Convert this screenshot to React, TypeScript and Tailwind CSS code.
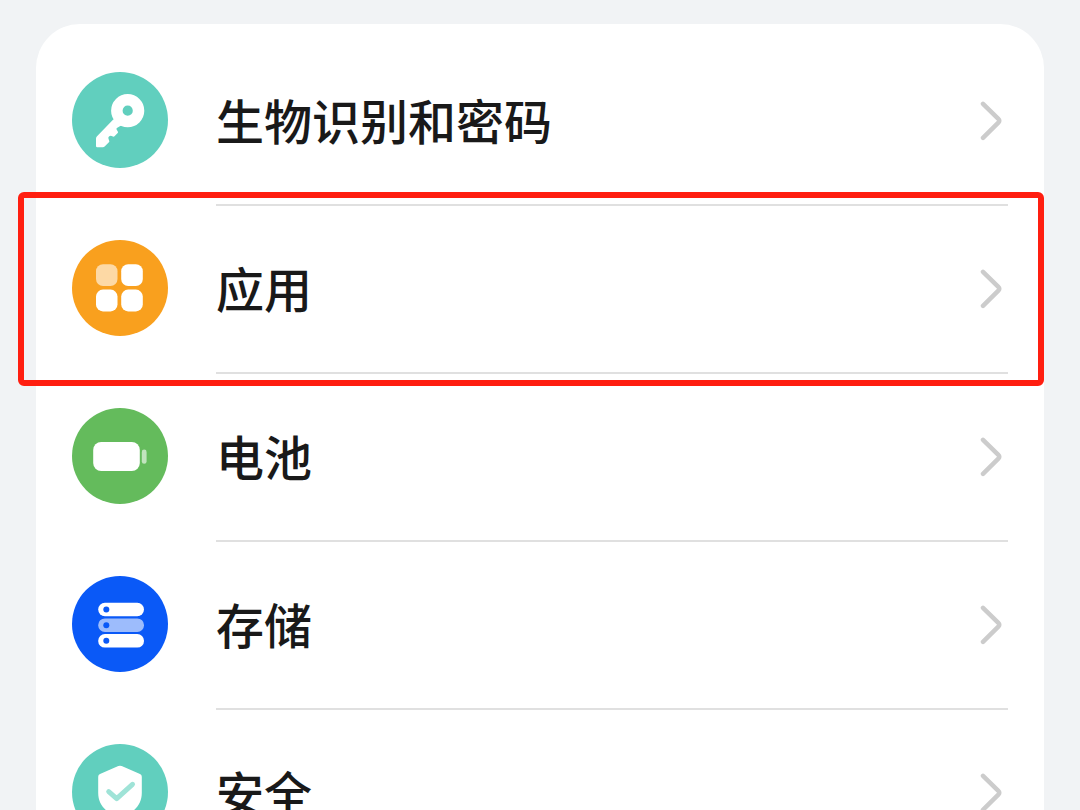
import { ReactNode } from 'react';

interface ISettingItem {
   id: string;
   label: string;
   circle: string;
   icon: ReactNode;
   highlighted?: boolean;
}

const KeyIcon = () => (
   <svg viewBox="0 0 96 96" className="size-24" fill="#fff" aria-hidden="true">
      <path
         fillRule="evenodd"
         d="M55.7 22.1a16.6 16.6 0 1 1 0 33.2 16.6 16.6 0 1 1 0-33.2ZM55.7 33.6a5.1 5.1 0 1 0 0 10.2 5.1 5.1 0 1 0 0-10.2Z"
      />
      <path d="M41.5 47.2 24.8 64.6a3 3 0 0 0-.8 2V74a1.2 1.2 0 0 0 1.2 1.2h5.6a3 3 0 0 0 2.1-.9l4-4.1a1.4 1.4 0 0 0 .2-1.8l-.6-1.7a1.8 1.8 0 0 1 .5-2.1l.8-.6a1.8 1.8 0 0 1 1.8-.1l1.3.7a1.4 1.4 0 0 0 1.6-.3l3.2-3.3a1.2 1.2 0 0 0 .1-1.5l-1.2-1.900a1.200 1.200 0 0 1 .3-1.500L50 53Z" />
   </svg>
);

const AppsIcon = () => (
   <svg viewBox="0 0 96 96" className="size-24" fill="#fff" aria-hidden="true">
      <rect x="24" y="24.2" width="21.5" height="21.8" rx="7" opacity="0.6" />
      <rect x="49.2" y="24.2" width="21.6" height="21.8" rx="7" />
      <rect x="24" y="49.6" width="21.5" height="21.8" rx="7" />
      <rect x="49.2" y="49.6" width="21.6" height="21.8" rx="7" />
   </svg>
);

const BatteryIcon = () => (
   <svg viewBox="0 0 96 96" className="size-24" fill="#fff" aria-hidden="true">
      <rect x="21.2" y="34" width="46.6" height="29" rx="8" />
      <rect x="69.8" y="41.6" width="4.8" height="14.2" rx="2.4" opacity="0.6" />
   </svg>
);

const StorageIcon = () => (
   <svg viewBox="0 0 96 96" className="size-24" fill="#fff" aria-hidden="true">
      <rect x="26.2" y="26.7" width="45.8" height="13.5" rx="6.7" />
      <rect x="26.2" y="42.4" width="45.8" height="13.5" rx="6.7" opacity="0.6" />
      <rect x="26.2" y="58.1" width="45.8" height="13.5" rx="6.7" />
      <g fill="#0a59f7">
         <circle cx="34.3" cy="33.5" r="3" />
         <circle cx="34.3" cy="49.2" r="3" />
         <circle cx="34.3" cy="64.8" r="3" />
      </g>
   </svg>
);

const ShieldIcon = () => (
   <svg viewBox="0 0 96 96" className="size-24" fill="#fff" aria-hidden="true">
      <path d="M46.3 22.1a4.5 4.5 0 0 1 3.4 0L68 30a3 3 0 0 1 1.8 2.8V49c0 11.5-7.5 19-19.8 24.8a4.5 4.5 0 0 1-4 0C33.7 68 26.2 60.5 26.2 49V32.8A3 3 0 0 1 28 30Z" />
      <path
         d="M36.7 47.6 44.7 54.6 60.5 40.3"
         fill="none"
         stroke="#9fe3d7"
         strokeWidth="5"
         strokeLinecap="round"
         strokeLinejoin="round"
      />
   </svg>
);

const ChevronIcon = () => (
   <svg viewBox="0 0 24 40" className="mr-1 h-10 w-6 shrink-0" fill="none" aria-hidden="true">
      <path
         d="M3 2.8 18.6 18.2a2.2 2.2 0 0 1 0 3.200L3 36.800"
         stroke="#ccc"
         strokeWidth="4.500"
         strokeLinecap="round"
         strokeLinejoin="round"
      />
   </svg>
);

const items: ISettingItem[] = [
   { id: 'biometrics', label: '生物识别和密码', circle: 'bg-[#61cfbe]', icon: <KeyIcon /> },
   { id: 'apps', label: '应用', circle: 'bg-[#f9a01e]', icon: <AppsIcon />, highlighted: true },
   { id: 'battery', label: '电池', circle: 'bg-[#64bb5c]', icon: <BatteryIcon /> },
   { id: 'storage', label: '存储', circle: 'bg-[#0a59f7]', icon: <StorageIcon /> },
   { id: 'security', label: '安全', circle: 'bg-[#61cfbe]', icon: <ShieldIcon /> },
];

const SettingRow = ({ item, isFirst }: { item: ISettingItem; isFirst: boolean }) => (
   <li className="relative">
      <a href={`#${item.id}`} className="flex h-42 items-center gap-12 px-9">
         <span className={`size-24 shrink-0 rounded-full ${item.circle}`}>{item.icon}</span>
         <span
            className={`flex flex-1 items-center justify-between self-stretch border-t-2 ${
               isFirst ? 'border-transparent' : 'border-[#e0e0e0]'
            }`}>
            <span className="pb-1 text-5xl font-medium text-[#191919]">{item.label}</span>
            <ChevronIcon />
         </span>
      </a>
      {item.highlighted && (
         <div className="pointer-events-none absolute -top-3 right-0 -bottom-3.5 -left-[18px] z-10 rounded-md border-6 border-[#ff1e10]" />
      )}
   </li>
);

const App = () => {
   return (
      <main
         lang="zh-CN"
         className="h-screen overflow-hidden bg-[#f1f3f5] px-9 pt-6 font-['Noto_Sans_CJK_SC',sans-serif]">
         <ul className="rounded-[44px] bg-white py-3">
            {items.map((item, index) => (
               <SettingRow key={item.id} item={item} isFirst={index === 0} />
            ))}
         </ul>
      </main>
   );
};

export default App;
